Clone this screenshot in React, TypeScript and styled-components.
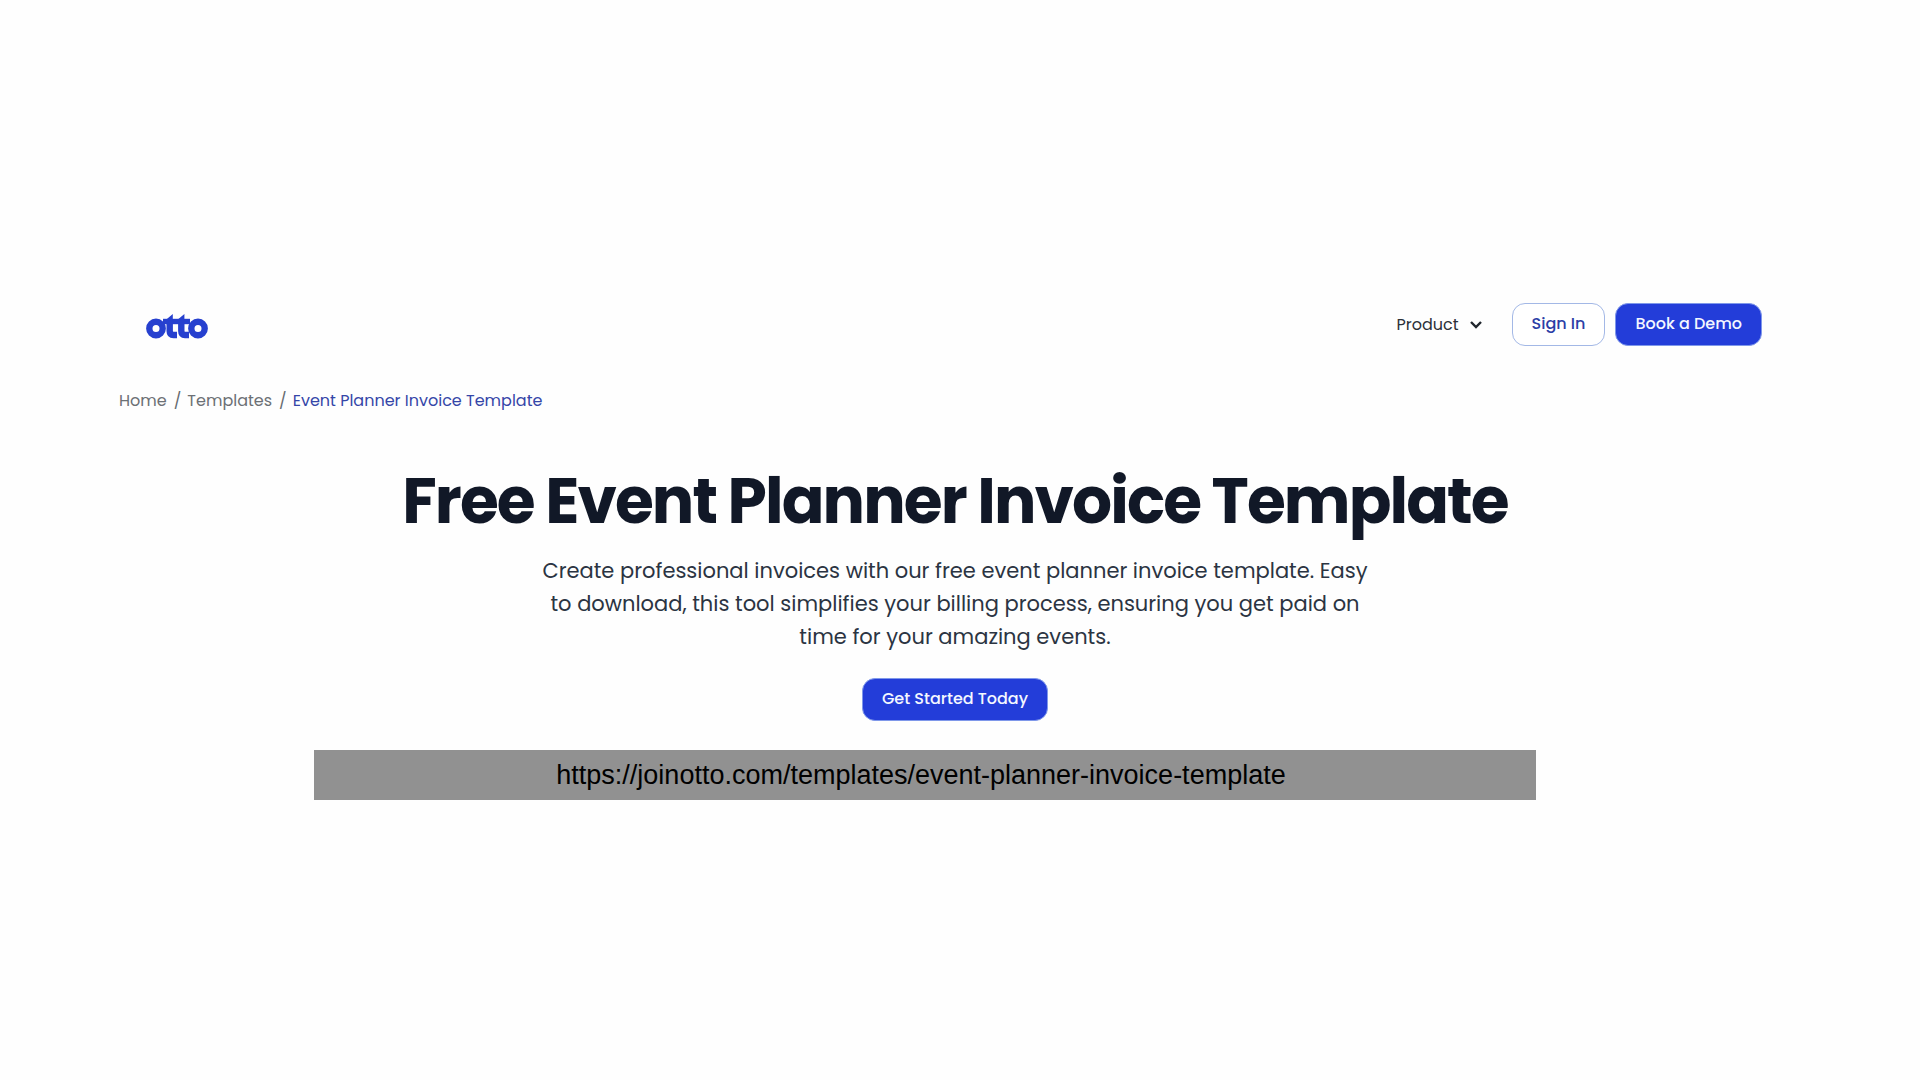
import React from "react";
import styled, { createGlobalStyle, css } from "styled-components";

const sans = `Poppins, Inter, "Open Sans", sans-serif`;

const GlobalStyle = createGlobalStyle`
  *, *::before, *::after { box-sizing: border-box; }
  body { margin: 0; background: #fefefe; color: #1f2937; font-family: ${sans}; }
`;

const Page = styled.div`
  padding-top: 303px;
`;

const Header = styled.header`
  display: flex;
  align-items: center;
  justify-content: space-between;
  padding: 0 158px 0 146px;
`;

const LogoLink = styled.a`
  display: block;
  padding-top: 3px;
  line-height: 0;
`;

const Nav = styled.nav`
  display: flex;
  align-items: center;
  gap: 10px;
`;

const MenuButton = styled.button`
  display: flex;
  align-items: center;
  gap: 10px;
  margin-right: 19px;
  padding: 0;
  border: 0;
  background: none;
  color: #2b3038;
  font: 400 16px/24px ${sans};
`;

const ActionLink = styled.a<{ $primary?: boolean }>`
  display: inline-flex;
  align-items: center;
  justify-content: center;
  height: 43px;
  padding: 0 19px 2px;
  border: 1px solid #a3b8e6;
  border-radius: 13px;
  background: #fff;
  color: #2c3ea6;
  font: 500 16px/24px ${sans};
  text-decoration: none;
  white-space: nowrap;
  ${(p) =>
    p.$primary &&
    css`
      background: #233dd9;
      border-color: #7f98ea;
      color: #f4f7ff;
    `}
`;

const Breadcrumb = styled.nav`
  padding: 43px 119px 0;
`;

const Crumbs = styled.ol`
  display: flex;
  margin: 0;
  padding: 0;
  list-style: none;
  font-size: 16px;
  line-height: 24px;
`;

const Crumb = styled.li`
  & + &::before {
    content: "/";
    margin: 0 6px 0 7px;
    color: #666b70;
  }
`;

const CrumbLink = styled.a<{ $current?: boolean }>`
  color: ${(p) => (p.$current ? "#3546a8" : "#6c7075")};
  text-decoration: none;
`;

const Hero = styled.main`
  display: flex;
  flex-direction: column;
  align-items: center;
  padding: 48px 10px 0 0;
  text-align: center;
`;

const Title = styled.h1`
  margin: 0;
  color: #111827;
  font-size: 63px;
  font-weight: 700;
  line-height: 80px;
  letter-spacing: -0.03em;
`;

const Lead = styled.p`
  max-width: 840px;
  margin: 13px 0 25px;
  color: #2b3442;
  font-size: 21px;
  line-height: 33px;
`;

const UrlBar = styled.footer`
  display: flex;
  justify-content: center;
  margin: 29px 384px 0 314px;
  padding: 5px 8px 5px 0;
  background: #919191;
`;

const UrlLink = styled.a`
  color: #000;
  font: 400 27px/40px "Liberation Sans", Arial, sans-serif;
  text-decoration: none;
`;

const Logo = () => (
  <svg width="62" height="25" viewBox="0 0 62 25" fill="none" stroke="#2640cf" role="img" aria-label="otto">
    <circle cx="10" cy="14.5" r="6.7" strokeWidth="6.4" />
    <circle cx="52" cy="14.5" r="6.7" strokeWidth="6.4" />
    <path d="M17 7.5H44" strokeWidth="5.4" />
    <path d="M23.7 5V17Q23.7 21 27.5 21H31M35.3 5V17Q35.3 21 39 21H43" strokeWidth="6.4" />
    <path d="M18.5 7L26.8 0V7ZM30 7L38.4 0V7Z" fill="#2640cf" stroke="none" />
  </svg>
);

const Chevron = () => (
  <svg width="14" height="10" viewBox="0 0 14 10" fill="none" stroke="#20262d" strokeWidth="2.4" aria-hidden="true">
    <path d="M2 2L7 7L12 2" />
  </svg>
);

export default function App() {
  return (
    <>
      <GlobalStyle />
      <Page>
        <Header>
          <LogoLink href="#home"><Logo /></LogoLink>
          <Nav aria-label="Main">
            <MenuButton type="button" aria-haspopup="true">Product<Chevron /></MenuButton>
            <ActionLink href="#sign-in">Sign In</ActionLink>
            <ActionLink href="#demo" $primary>Book a Demo</ActionLink>
          </Nav>
        </Header>
        <Breadcrumb aria-label="Breadcrumb">
          <Crumbs>
            <Crumb><CrumbLink href="#home">Home</CrumbLink></Crumb>
            <Crumb><CrumbLink href="#templates">Templates</CrumbLink></Crumb>
            <Crumb><CrumbLink href="#template" $current aria-current="page">Event Planner Invoice Template</CrumbLink></Crumb>
          </Crumbs>
        </Breadcrumb>
        <Hero>
          <Title>Free Event Planner Invoice Template</Title>
          <Lead>
            Create professional invoices with our free event planner invoice template. Easy
            to download, this tool simplifies your billing process, ensuring you get paid on
            time for your amazing events.
          </Lead>
          <ActionLink href="#start" $primary>Get Started Today</ActionLink>
        </Hero>
        <UrlBar>
          <UrlLink href="https://joinotto.com/templates/event-planner-invoice-template">
            https://joinotto.com/templates/event-planner-invoice-template
          </UrlLink>
        </UrlBar>
      </Page>
    </>
  );
}
